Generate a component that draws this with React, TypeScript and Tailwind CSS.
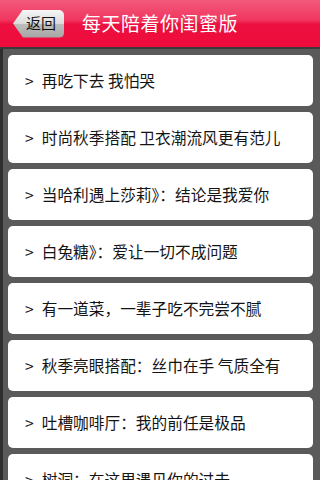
import React from 'react';

const items = [
  '再吃下去 我怕哭',
  '时尚秋季搭配 卫衣潮流风更有范儿',
  '当哈利遇上莎莉》：结论是我爱你',
  '白兔糖》：爱让一切不成问题',
  '有一道菜，一辈子吃不完尝不腻',
  '秋季亮眼搭配：丝巾在手 气质全有',
  '吐槽咖啡厅：我的前任是极品',
  '树洞：在这里遇见你的过去',
];

export default function App() {
  return (
    <div
      className="w-[320px] h-[480px] overflow-hidden bg-[#5a5a5a]"
      style={{ fontFamily: '"Noto Sans CJK SC", "Noto Sans", sans-serif' }}
    >
      {/* Title bar */}
      <div className="h-[47px] flex items-center bg-[linear-gradient(to_bottom,#f25a7c_0%,#f03760_42%,#ec1040_52%,#ef0b3b_100%)]">
        <button
          className="ml-[13px] w-[51px] h-[28px] flex items-center justify-end pr-[8px] rounded-r-[5px] bg-[linear-gradient(to_bottom,#f6f6f6_0%,#dcdcdc_48%,#bcbcbc_52%,#a6a6a6_100%)] text-[15px] text-[#111]"
          style={{ clipPath: 'polygon(0 50%, 10px 0, 100% 0, 100% 100%, 10px 100%)' }}
        >
          返回
        </button>
        <h1 className="ml-[18px] text-[19px] text-white tracking-[0.5px]">每天陪着你闺蜜版</h1>
      </div>
      <div className="h-[2px] bg-[#3a3a3a]" />

      {/* List */}
      <div className="flex flex-col gap-[6px] pt-[6px] pl-[8px] pr-[7px] border-l-[3px] border-[#2e2e2e]">
        {items.map((text, i) => (
          <div
            key={i}
            className="h-[51px] shrink-0 -ml-[3px] rounded-[5px] bg-white flex items-center pl-[17px] text-[15.7px] text-[#141414]"
          >
            <span className="mr-[8px]">&gt;</span>
            <span className="whitespace-nowrap">{text}</span>
          </div>
        ))}
      </div>
    </div>
  );
}
